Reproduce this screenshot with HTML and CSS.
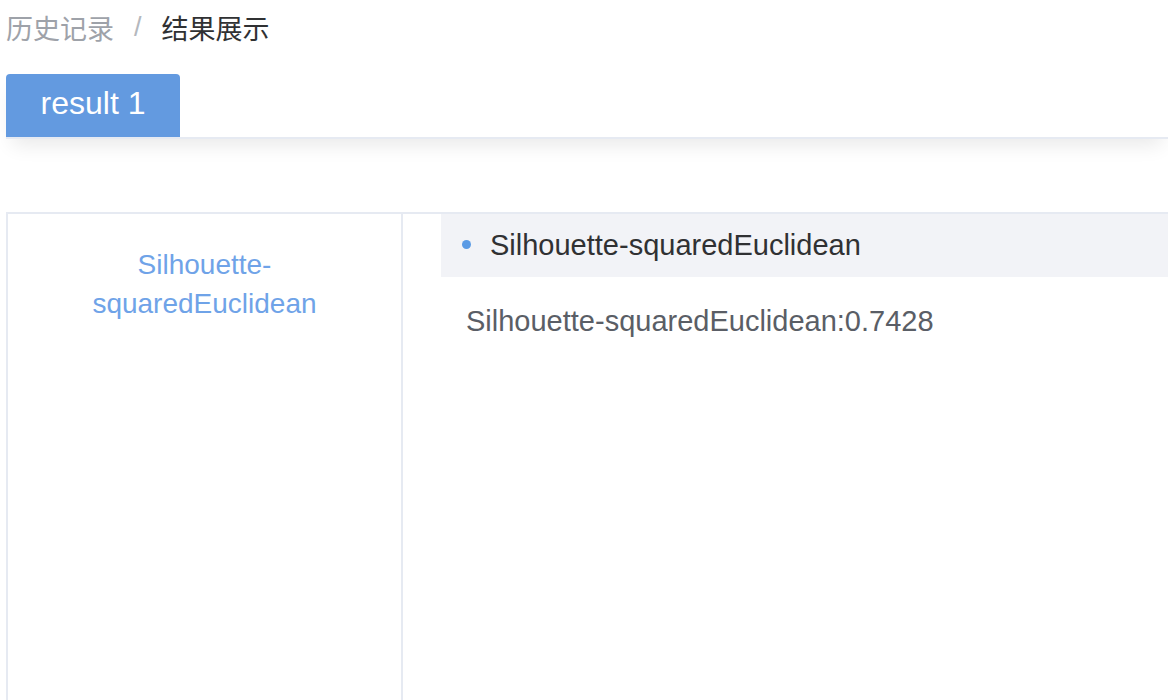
FILE: index.html
```html
<!DOCTYPE html>
<html lang="zh">
<head>
<meta charset="utf-8">
<title>结果展示</title>
<link rel="stylesheet" href="styles.css">
</head>
<body>
<div class="page">
  <nav class="breadcrumb">
    <span class="crumb-link">历史记录</span>
    <span class="crumb-sep">/</span>
    <span class="crumb-current">结果展示</span>
  </nav>
  <div class="tabs">
    <div class="tab active">result 1</div>
  </div>
  <div class="result-table">
    <div class="metric-col">
      <div class="metric-name">Silhouette-<br>squaredEuclidean</div>
    </div>
    <div class="detail-col">
      <div class="detail-head"><span class="dot"></span>Silhouette-squaredEuclidean</div>
      <div class="detail-value">Silhouette-squaredEuclidean:0.7428</div>
    </div>
  </div>
</div>
</body>
</html>
```

FILE: styles.css
```css
html, body {
  margin: 0;
  padding: 0;
  background: #ffffff;
  overflow: hidden;
}
body {
  font-family: "Liberation Sans", "Noto Sans CJK SC", sans-serif;
  width: 1168px;
  height: 700px;
}
.page {
  padding-left: 6px;
}
.breadcrumb {
  height: 54px;
  display: flex;
  align-items: center;
  font-family: "Noto Sans CJK SC", sans-serif;
  font-size: 27px;
}
.crumb-link {
  color: #9ea2a9;
}
.crumb-sep {
  color: #b4b8be;
  margin: 0 20px 0 20px;
  font-family: "Liberation Sans", sans-serif;
}
.crumb-current {
  color: #303133;
}
.tabs {
  margin-top: 20px;
  height: 63px;
  display: flex;
  border-bottom: 2px solid #e6eaf2;
  box-shadow: 0 12px 20px -6px rgba(0, 0, 0, 0.09);
}
.tab {
  width: 174px;
  height: 63px;
  box-sizing: border-box;
  display: flex;
  align-items: center;
  justify-content: center;
  font-size: 32px;
  color: #ffffff;
  background: #639ae0;
  border-radius: 4px 4px 0 0;
  padding-bottom: 4px;
}
.result-table {
  margin-top: 73px;
  display: flex;
  border-top: 2px solid #e6eaf2;
  border-left: 2px solid #e6eaf2;
  height: 520px;
}
.metric-col {
  width: 395px;
  border-right: 2px solid #e6eaf2;
  padding-top: 31px;
  box-sizing: border-box;
}
.metric-name {
  text-align: center;
  color: #6fa3e8;
  font-size: 28px;
  line-height: 39px;
}
.detail-col {
  flex: 1;
  padding-left: 38px;
}
.detail-head {
  height: 63px;
  background: #f2f3f7;
  display: flex;
  align-items: center;
  padding-left: 21px;
  font-size: 29px;
  color: #303133;
}
.dot {
  width: 9px;
  height: 9px;
  border-radius: 50%;
  background: #5b9be5;
  margin-right: 19px;
  margin-top: -2px;
}
.detail-value {
  padding-left: 25px;
  margin-top: 27px;
  font-size: 29px;
  line-height: 34px;
  color: #5a5e66;
}
```
